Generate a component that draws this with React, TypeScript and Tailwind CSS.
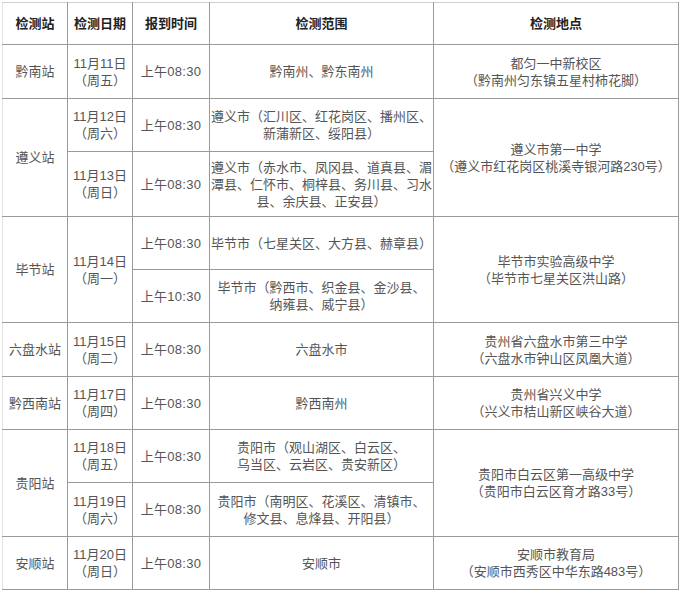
const font = { fontFamily: '"Liberation Sans", "Noto Sans CJK SC", sans-serif' }

type Row = {
  station?: { name: string; span: number }
  date?: { day: string; week: string; span: number }
  time: string
  range: string[]
  site?: { name: string; addr: string; span: number }
  h: string
}

const rows: Row[] = [
  {
    station: { name: '黔南站', span: 1 },
    date: { day: '11月11日', week: '（周五）', span: 1 },
    time: '上午08:30',
    range: ['黔南州、黔东南州'],
    site: { name: '都匀一中新校区', addr: '（黔南州匀东镇五星村柿花脚）', span: 1 },
    h: 'h-[54px]',
  },
  {
    station: { name: '遵义站', span: 2 },
    date: { day: '11月12日', week: '（周六）', span: 1 },
    time: '上午08:30',
    range: ['遵义市（汇川区、红花岗区、播州区、', '新蒲新区、绥阳县）'],
    site: { name: '遵义市第一中学', addr: '（遵义市红花岗区桃溪寺银河路230号）', span: 2 },
    h: 'h-[53px]',
  },
  {
    date: { day: '11月13日', week: '（周日）', span: 1 },
    time: '上午08:30',
    range: ['遵义市（赤水市、凤冈县、道真县、湄', '潭县、仁怀市、桐梓县、务川县、习水', '县、余庆县、正安县）'],
    h: 'h-[65px]',
  },
  {
    station: { name: '毕节站', span: 2 },
    date: { day: '11月14日', week: '（周一）', span: 2 },
    time: '上午08:30',
    range: ['毕节市（七星关区、大方县、赫章县）'],
    site: { name: '毕节市实验高级中学', addr: '（毕节市七星关区洪山路）', span: 2 },
    h: 'h-[53px]',
  },
  {
    time: '上午10:30',
    range: ['毕节市（黔西市、织金县、金沙县、', '纳雍县、威宁县）'],
    h: 'h-[53px]',
  },
  {
    station: { name: '六盘水站', span: 1 },
    date: { day: '11月15日', week: '（周二）', span: 1 },
    time: '上午08:30',
    range: ['六盘水市'],
    site: { name: '贵州省六盘水市第三中学', addr: '（六盘水市钟山区凤凰大道）', span: 1 },
    h: 'h-[54px]',
  },
  {
    station: { name: '黔西南站', span: 1 },
    date: { day: '11月17日', week: '（周四）', span: 1 },
    time: '上午08:30',
    range: ['黔西南州'],
    site: { name: '贵州省兴义中学', addr: '（兴义市桔山新区峡谷大道）', span: 1 },
    h: 'h-[53px]',
  },
  {
    station: { name: '贵阳站', span: 2 },
    date: { day: '11月18日', week: '（周五）', span: 1 },
    time: '上午08:30',
    range: ['贵阳市（观山湖区、白云区、', '乌当区、云岩区、贵安新区）'],
    site: { name: '贵阳市白云区第一高级中学', addr: '（贵阳市白云区育才路33号）', span: 2 },
    h: 'h-[53px]',
  },
  {
    date: { day: '11月19日', week: '（周六）', span: 1 },
    time: '上午08:30',
    range: ['贵阳市（南明区、花溪区、清镇市、', '修文县、息烽县、开阳县）'],
    h: 'h-[54px]',
  },
  {
    station: { name: '安顺站', span: 1 },
    date: { day: '11月20日', week: '（周日）', span: 1 },
    time: '上午08:30',
    range: ['安顺市'],
    site: { name: '安顺市教育局', addr: '（安顺市西秀区中华东路483号）', span: 1 },
    h: 'h-[53px]',
  },
]

const cell = 'border border-[#9a9a9a] text-center align-middle p-0'

export default function App() {
  return (
    <div className="min-h-[593px] w-[679px] bg-white pl-[2px] pt-[2px]" style={font}>
      <table className="table-fixed border-collapse w-[677px] text-[13px] leading-[17px] text-[#555]">
        <colgroup>
          <col className="w-[65px]" />
          <col className="w-[65px]" />
          <col className="w-[77px]" />
          <col className="w-[224px]" />
          <col className="w-[245px]" />
        </colgroup>
        <thead>
          <tr className="h-[42px] font-bold text-[#222]">
            <th className={`${cell} border-t-[#cfcfcf] border-l-[#e2e2e2]`}>检测站</th>
            <th className={`${cell} border-t-[#cfcfcf]`}>检测日期</th>
            <th className={`${cell} border-t-[#cfcfcf]`}>报到时间</th>
            <th className={`${cell} border-t-[#cfcfcf]`}>检测范围</th>
            <th className={`${cell} border-t-[#cfcfcf]`}>检测地点</th>
          </tr>
        </thead>
        <tbody>
          {rows.map((r, i) => (
            <tr key={i} className={r.h}>
              {r.station && (
                <td rowSpan={r.station.span} className={`${cell} border-l-[#e2e2e2]`}>
                  {r.station.name}
                </td>
              )}
              {r.date && (
                <td rowSpan={r.date.span} className={cell}>
                  <div>{r.date.day}</div>
                  <div>{r.date.week}</div>
                </td>
              )}
              <td className={`${cell} tracking-[0.3px]`}>{r.time}</td>
              <td className={cell}>
                {r.range.map((l) => (
                  <div key={l} className="whitespace-nowrap">{l}</div>
                ))}
              </td>
              {r.site && (
                <td rowSpan={r.site.span} className={cell}>
                  <div>{r.site.name}</div>
                  <div className="whitespace-nowrap">{r.site.addr}</div>
                </td>
              )}
            </tr>
          ))}
        </tbody>
      </table>
    </div>
  )
}
